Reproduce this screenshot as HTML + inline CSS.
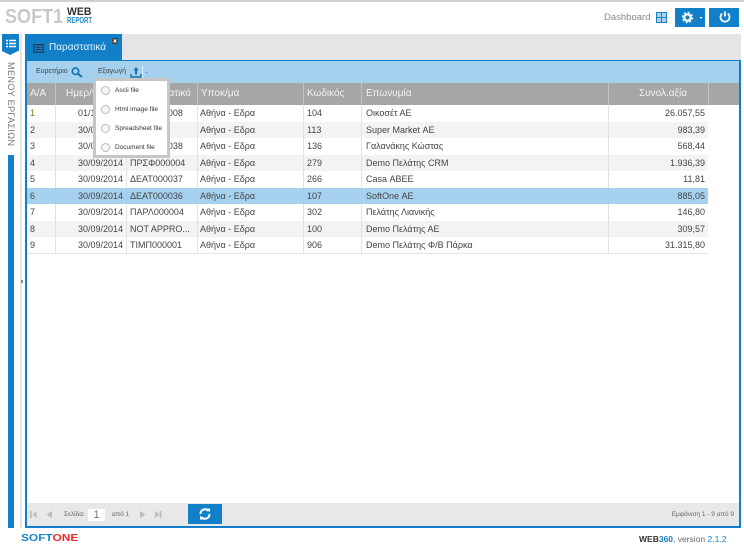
<!DOCTYPE html>
<html><head><meta charset="utf-8"><style>
html,body{margin:0;padding:0;background:#fff}
body{width:744px;height:550px;position:relative;overflow:hidden;font-family:"Liberation Sans",sans-serif;color:#555}
.a{position:absolute;white-space:nowrap}
.r{position:absolute;left:27px;width:681px;height:16.5px;font-size:9px;line-height:16.5px;color:#444}
.r span{position:absolute;white-space:nowrap;top:0}
.r i{position:absolute;top:0;bottom:0;width:1px;background:#e2e2e2}
.h{position:absolute;top:84px;color:#f2f2f2;font-size:10px;line-height:20px;white-space:nowrap}
.hl{position:absolute;top:83px;height:22px;width:1px;background:#c4c4c4}
.m{position:absolute;left:115px;font-size:6.5px;line-height:8px;color:#333;white-space:nowrap}
.c{position:absolute;left:101px;width:7px;height:7px;border:1px solid #bbb;border-radius:50%;background:#f6f6f6}
</style></head><body>
<div class="a" style="left:0;top:0;width:744px;height:2px;background:#d0d0d0"></div>
<div class="a" style="left:5px;top:7px;font-size:20.5px;font-weight:bold;color:#c8c8c8;line-height:20px;text-transform:uppercase;transform:scaleX(.88);transform-origin:left">soft1</div>
<div class="a" style="left:67px;top:6px;font-size:11px;font-weight:bold;color:#333;line-height:12px;transform:scaleX(.95);transform-origin:left">WEB</div>
<div class="a" style="left:67px;top:16px;font-size:8px;font-weight:bold;color:#1b82c6;line-height:10px;transform:scaleX(.75);transform-origin:left">REPORT</div>

<div class="a" style="left:604px;top:11px;font-size:9.5px;color:#888;line-height:13px">Dashboard</div>
<svg class="a" style="left:656px;top:12px" width="11" height="11"><rect x=".5" y=".5" width="10" height="10" fill="#a9d2ee" stroke="#1b82c6"/><path d="M5.500 1V10M1 5.500H10" stroke="#1b82c6"/></svg>
<div class="a" style="left:675px;top:8px;width:30px;height:19px;background:#1180c8"></div>
<svg class="a" style="left:681px;top:11px" width="24" height="14"><circle cx="6.500" cy="6.500" r="3.200" fill="none" stroke="#fff" stroke-width="2.200"/><circle cx="6.500" cy="6.500" r="5" fill="none" stroke="#fff" stroke-width="1.400" stroke-dasharray="2 1.930"/><path d="M18.500 6h3l-1.500 2z" fill="#fff"/></svg>
<div class="a" style="left:709px;top:8px;width:30px;height:19px;background:#1180c8"></div>
<svg class="a" style="left:719px;top:10px" width="12" height="14"><path d="M3.200 3.600A4.500 4.500 0 1 0 8.800 3.600" fill="none" stroke="#fff" stroke-width="1.800"/><path d="M6 1.500V6.500" stroke="#fff" stroke-width="1.800"/></svg>

<div class="a" style="left:2px;top:34px;width:17px;height:17px;background:#1180c8"></div>
<div class="a" style="left:2px;top:51px;width:0;height:0;border-left:8.500px solid transparent;border-right:8.500px solid transparent;border-top:4px solid #1180c8"></div>
<svg class="a" style="left:6px;top:39px" width="10" height="9"><path d="M0 1.500h2M3 1.500h7M0 4.500h2M3 4.500h7M0 7.500h2M3 7.500h7" stroke="#fff" stroke-width="1.600"/></svg>
<div class="a" style="left:16px;top:62px;font-size:9.200px;color:#777;letter-spacing:.3px;transform:rotate(90deg);transform-origin:left top;line-height:11px">ΜΕΝΟΥ ΕΡΓΑΣΙΩΝ</div>
<div class="a" style="left:8px;top:155px;width:6px;height:373px;background:#1180c8"></div>
<div class="a" style="left:20px;top:34px;width:2px;height:494px;background:#e4e4e4"></div>
<div class="a" style="left:21px;top:280px;width:2px;height:3px;background:#888"></div>

<div class="a" style="left:25px;top:34px;width:716px;height:26px;background:#e5e5e5"></div>
<div class="a" style="left:25px;top:34px;width:97px;height:27px;background:#1180c8"></div>
<svg class="a" style="left:33px;top:44px" width="11" height="9"><rect x=".7" y=".7" width="9.600" height="7.500" fill="none" stroke="#2a3a45" stroke-width="1.200"/><path d="M2.500 3.300h6M2.500 5.500h6" stroke="#2a3a45"/></svg>
<div class="a" style="left:49px;top:41px;font-size:10px;color:#e8f3fb;line-height:14px">Παραστατικά</div>
<svg class="a" style="left:112px;top:38px" width="6" height="6"><rect width="6" height="6" fill="#444"/><path d="M1.500 1.500L4.500 4.500M4.500 1.500L1.500 4.500" stroke="#fff"/></svg>

<div class="a" style="left:25px;top:60px;width:712px;height:464px;border:2px solid #1180c8;background:#fff"></div>
<div class="a" style="left:27px;top:61px;width:712px;height:22px;background:#a5d1ee"></div>
<div class="a" style="left:36px;top:67px;font-size:7px;color:#444;line-height:10px">Ευρετήριο</div>
<svg class="a" style="left:71px;top:67px" width="12" height="11"><circle cx="4.500" cy="4.300" r="3.200" fill="none" stroke="#1272b5" stroke-width="1.600"/><path d="M7 6.800L11 10" stroke="#1272b5" stroke-width="2"/></svg>
<div class="a" style="left:98px;top:67px;font-size:7px;color:#444;line-height:10px">Εξαγωγή</div>
<svg class="a" style="left:130px;top:66px" width="12" height="13"><path d="M6 1L3.300 4.300H5V8.500H7V4.300H8.700Z" fill="#1272b5"/><path d="M1 8V11H11V8" fill="none" stroke="#1272b5" stroke-width="1.400"/></svg>
<div class="a" style="left:142px;top:66px;width:1px;height:12px;background:#e5f0f8"></div>
<div class="a" style="left:145px;top:72px;width:3px;height:1px;background:#7ea9c6"></div>

<div class="a" style="left:27px;top:83px;width:712px;height:22px;background:#a6a6a6"></div>
<div class="hl" style="left:55px"></div><div class="hl" style="left:126px"></div><div class="hl" style="left:197px"></div><div class="hl" style="left:303px"></div><div class="hl" style="left:361px"></div><div class="hl" style="left:608px"></div><div class="hl" style="left:708px"></div>
<div class="h" style="left:30px">Α/Α</div>
<div class="h" style="left:66px">Ημερ/νία</div>
<div class="h" style="left:134px">Παραστατικό</div>
<div class="h" style="left:201px">Υποκ/μα</div>
<div class="h" style="left:307px">Κωδικός</div>
<div class="h" style="left:366px">Επωνυμία</div>
<div class="h" style="left:639px">Συνολ.αξία</div>

<div class="r" style="top:105px"><i style="left:28px"></i><i style="left:99px"></i><i style="left:170px"></i><i style="left:276px"></i><i style="left:334px"></i><i style="left:581px"></i><span style="left:3px;color:#8a6d1f">1</span><span style="left:51px">01/10/2014</span><span style="left:103px">ΔΕΑΤ000008</span><span style="left:173px">Αθήνα - Εδρα</span><span style="left:280px">104</span><span style="left:339px">Οικοσέτ ΑΕ</span><span style="right:3px">26.057,55</span></div>
<div class="r" style="top:121.500px;background:#f3f3f3"><i style="left:28px"></i><i style="left:99px"></i><i style="left:170px"></i><i style="left:276px"></i><i style="left:334px"></i><i style="left:581px"></i><span style="left:3px">2</span><span style="left:51px">30/09/2014</span><span style="left:173px">Αθήνα - Εδρα</span><span style="left:280px">113</span><span style="left:339px">Super Market ΑΕ</span><span style="right:3px">983,39</span></div>
<div class="r" style="top:138px"><i style="left:28px"></i><i style="left:99px"></i><i style="left:170px"></i><i style="left:276px"></i><i style="left:334px"></i><i style="left:581px"></i><span style="left:3px">3</span><span style="left:51px">30/09/2014</span><span style="left:103px">ΔΕΑΤ000038</span><span style="left:173px">Αθήνα - Εδρα</span><span style="left:280px">136</span><span style="left:339px">Γαλανάκης Κώστας</span><span style="right:3px">568,44</span></div>
<div class="r" style="top:154.500px;background:#f3f3f3"><i style="left:28px"></i><i style="left:99px"></i><i style="left:170px"></i><i style="left:276px"></i><i style="left:334px"></i><i style="left:581px"></i><span style="left:3px">4</span><span style="left:51px">30/09/2014</span><span style="left:103px">ΠΡΣΦ000004</span><span style="left:173px">Αθήνα - Εδρα</span><span style="left:280px">279</span><span style="left:339px">Demo Πελάτης CRM</span><span style="right:3px">1.936,39</span></div>
<div class="r" style="top:171px"><i style="left:28px"></i><i style="left:99px"></i><i style="left:170px"></i><i style="left:276px"></i><i style="left:334px"></i><i style="left:581px"></i><span style="left:3px">5</span><span style="left:51px">30/09/2014</span><span style="left:103px">ΔΕΑΤ000037</span><span style="left:173px">Αθήνα - Εδρα</span><span style="left:280px">266</span><span style="left:339px">Casa ΑΒΕΕ</span><span style="right:3px">11,81</span></div>
<div class="r" style="top:187.500px;background:#a5d1ee"><span style="left:3px">6</span><span style="left:51px">30/09/2014</span><span style="left:103px">ΔΕΑΤ000036</span><span style="left:173px">Αθήνα - Εδρα</span><span style="left:280px">107</span><span style="left:339px">SoftOne ΑΕ</span><span style="right:3px">885,05</span></div>
<div class="r" style="top:204px"><i style="left:28px"></i><i style="left:99px"></i><i style="left:170px"></i><i style="left:276px"></i><i style="left:334px"></i><i style="left:581px"></i><span style="left:3px">7</span><span style="left:51px">30/09/2014</span><span style="left:103px">ΠΑΡΛ000004</span><span style="left:173px">Αθήνα - Εδρα</span><span style="left:280px">302</span><span style="left:339px">Πελάτης Λιανικής</span><span style="right:3px">146,80</span></div>
<div class="r" style="top:220.500px;background:#f3f3f3"><i style="left:28px"></i><i style="left:99px"></i><i style="left:170px"></i><i style="left:276px"></i><i style="left:334px"></i><i style="left:581px"></i><span style="left:3px">8</span><span style="left:51px">30/09/2014</span><span style="left:103px">NOT APPRO...</span><span style="left:173px">Αθήνα - Εδρα</span><span style="left:280px">100</span><span style="left:339px">Demo Πελάτης ΑΕ</span><span style="right:3px">309,57</span></div>
<div class="r" style="top:237px"><i style="left:28px"></i><i style="left:99px"></i><i style="left:170px"></i><i style="left:276px"></i><i style="left:334px"></i><i style="left:581px"></i><span style="left:3px">9</span><span style="left:51px">30/09/2014</span><span style="left:103px">ΤΙΜΠ000001</span><span style="left:173px">Αθήνα - Εδρα</span><span style="left:280px">906</span><span style="left:339px">Demo Πελάτης Φ/Β Πάρκα</span><span style="right:3px">31.315,80</span></div>
<div class="a" style="left:27px;top:253px;width:681px;height:1px;background:#e2e2e2"></div>

<div class="a" style="left:93px;top:78px;width:71px;height:74px;background:#fff;border:3px solid #c6c6c6"></div>
<div class="c" style="top:86px"></div><div class="m" style="top:87px">Ascii file</div>
<div class="c" style="top:105px"></div><div class="m" style="top:106px">Html image file</div>
<div class="c" style="top:124px"></div><div class="m" style="top:125px">Spreadsheet file</div>
<div class="c" style="top:143px"></div><div class="m" style="top:144px">Document file</div>

<div class="a" style="left:27px;top:503px;width:712px;height:23px;background:#e8e8e8"></div>
<svg class="a" style="left:30px;top:511px" width="132" height="8" fill="#bdbdbd"><path d="M0 0h1.800v7H0zM6.500 0v7L2.500 3.500zM22 0v7L16.500 3.500zM110 0v7l5.500-3.500zM125 0v7l4.500-3.500zM129.700 0h1.800v7h-1.800z"/></svg>
<div class="a" style="left:64px;top:510px;font-size:6.500px;color:#666;line-height:9px">Σελίδα:</div>
<div class="a" style="left:88px;top:509px;width:17px;height:12px;background:#fff;font-size:11px;color:#777;text-align:center;line-height:12px">1</div>
<div class="a" style="left:112px;top:510px;font-size:6.500px;color:#666;line-height:9px">από 1</div>
<div class="a" style="left:188px;top:504px;width:34px;height:20px;background:#1180c8"></div>
<svg class="a" style="left:199px;top:508px" width="12" height="12" fill="none" stroke="#fff" stroke-width="2"><path d="M1.500 6A4.500 4.500 0 0 1 9.500 3"/><path d="M10.500 6A4.500 4.500 0 0 1 2.500 9"/><path d="M8 0.500L11 0.500V4.500Z M4 11.500L1 11.500V7.500Z" fill="#fff" stroke="none"/></svg>
<div class="a" style="right:10px;top:509.500px;font-size:6.500px;color:#666;line-height:9px">Εμφάνιση 1 - 9 από 9</div>

<div class="a" style="left:21px;top:533px;font-size:10px;font-weight:bold;color:#1b82c6;line-height:11px;text-transform:uppercase;transform:scaleX(1.190);transform-origin:left">soft<span style="color:#ee2b2b">one</span></div>
<div class="a" style="left:639px;top:534px;font-size:8.500px;color:#666;line-height:11px"><b style="color:#333">WEB<span style="color:#1b82c6">360</span></b>, version <span style="color:#1b82c6">2.1.2</span></div>
</body></html>
